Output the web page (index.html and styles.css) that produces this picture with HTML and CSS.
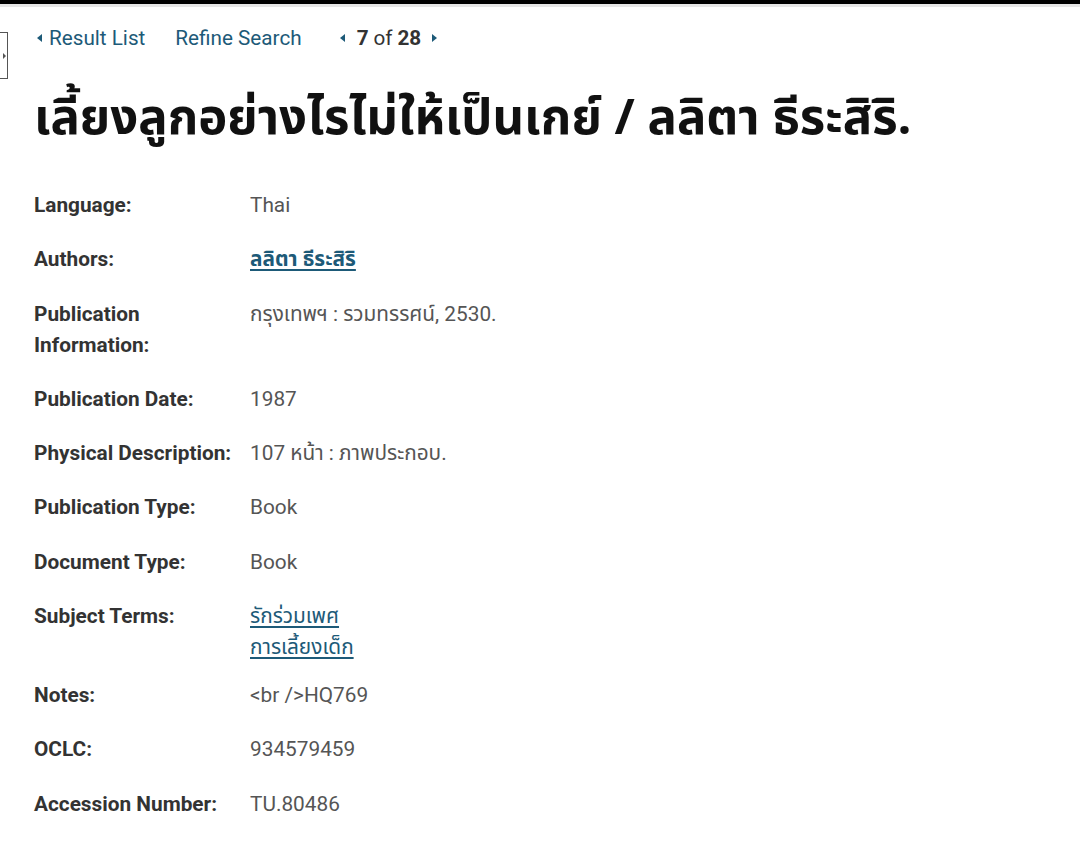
FILE: index.html
```html
<!DOCTYPE html>
<html lang="th">
<head>
<meta charset="utf-8">
<link rel="stylesheet" href="styles.css">
</head>
<body>
<div class="topbar"></div>
<div class="subbar"></div>
<div class="page">
  <div class="sidetab"><span class="sidearrow"></span></div>
  <main class="content">
    <nav class="nav">
      <a class="navlink back"><span class="tri tri-left"></span>Result List</a>
      <a class="navlink refine">Refine Search</a>
      <span class="pager"><span class="tri tri-left"></span><b>7</b> of <b>28</b><span class="tri tri-right"></span></span>
    </nav>
    <h1 class="title">เลี้ยงลูกอย่างไรไม่ให้เป็นเกย์ / ลลิตา ธีระสิริ.</h1>
    <dl class="details">
      <div class="row"><dt>Language:</dt><dd>Thai</dd></div>
      <div class="row"><dt>Authors:</dt><dd><a class="link strong">ลลิตา ธีระสิริ</a></dd></div>
      <div class="row"><dt>Publication<br>Information:</dt><dd>กรุงเทพฯ : รวมทรรศน์, 2530.</dd></div>
      <div class="row"><dt>Publication Date:</dt><dd>1987</dd></div>
      <div class="row"><dt>Physical Description:</dt><dd>107 หน้า : ภาพประกอบ.</dd></div>
      <div class="row"><dt>Publication Type:</dt><dd>Book</dd></div>
      <div class="row"><dt>Document Type:</dt><dd>Book</dd></div>
      <div class="row row-tight"><dt>Subject Terms:</dt><dd><a class="link">รักร่วมเพศ</a><br><a class="link">การเลี้ยงเด็ก</a></dd></div>
      <div class="row"><dt>Notes:</dt><dd>&lt;br /&gt;HQ769</dd></div>
      <div class="row"><dt>OCLC:</dt><dd>934579459</dd></div>
      <div class="row"><dt>Accession Number:</dt><dd>TU.80486</dd></div>
    </dl>
  </main>
</div>
</body>
</html>
```
FILE: styles.css
```css
html, body {
  margin: 0;
  padding: 0;
  background: #ffffff;
}
body {
  font-family: Roboto, "Noto Sans", "Noto Sans Thai", "Liberation Sans", sans-serif;
  color: #333;
}
.topbar {
  height: 4px;
  background: #000;
}
.subbar {
  height: 3px;
  background: #e6e6e6;
}
.page {
  display: flex;
  align-items: flex-start;
}
.sidetab {
  width: 8px;
  height: 47px;
  margin-top: 25px;
  border: 1px solid #555;
  border-left: none;
  box-sizing: border-box;
  display: flex;
  align-items: center;
  justify-content: flex-end;
  flex: none;
}
.sidearrow {
  width: 0;
  height: 0;
  border-top: 3px solid transparent;
  border-bottom: 3px solid transparent;
  border-left: 3px solid #555;
  margin-right: 1px;
}
.content {
  margin-left: 26px;
  flex: 1;
}
.nav {
  display: flex;
  align-items: center;
  height: 24px;
  margin-top: 19px;
  font-size: 20.7px;
}
.navlink {
  color: #1d5a78;
  display: inline-flex;
  align-items: center;
}
.back { margin-left: 3px; }
.refine { margin-left: 30px; }
.pager {
  margin-left: 38px;
  color: #333;
  display: inline-flex;
  align-items: center;
}
.pager b { font-weight: 700; margin: 0 5px; }
.pager b:last-of-type { margin-right: 0; }
.tri {
  width: 0;
  height: 0;
  border-top: 4.5px solid transparent;
  border-bottom: 4.5px solid transparent;
  display: inline-block;
}
.tri-left {
  border-right: 5px solid #1d5a78;
  margin-right: 7px;
}
.tri-right {
  border-left: 5px solid #1d5a78;
  margin-left: 11px;
}
.pager .tri-left { margin-right: 7px; }
.title {
  margin: 34px 0 0 0;
  font-size: 49px;
  line-height: 70px;
  font-weight: 700;
  color: #111;
  font-family: "Noto Sans Thai", "Noto Sans", Roboto, sans-serif;
}
.details {
  margin: 36px 0 0 0;
}
.row {
  display: flex;
  margin-bottom: 23.3px;
  font-size: 20.8px;
  line-height: 31px;
}
.row-tight {
  margin-bottom: 17px;
}
.row dt {
  width: 216px;
  flex: none;
  font-weight: 700;
  color: #333;
}
.row dd {
  margin: 0;
  color: #555;
}
.link {
  color: #1d5a78;
  text-decoration: underline;
  text-underline-offset: 3px;
}
.link.strong { font-weight: 700; }
```
